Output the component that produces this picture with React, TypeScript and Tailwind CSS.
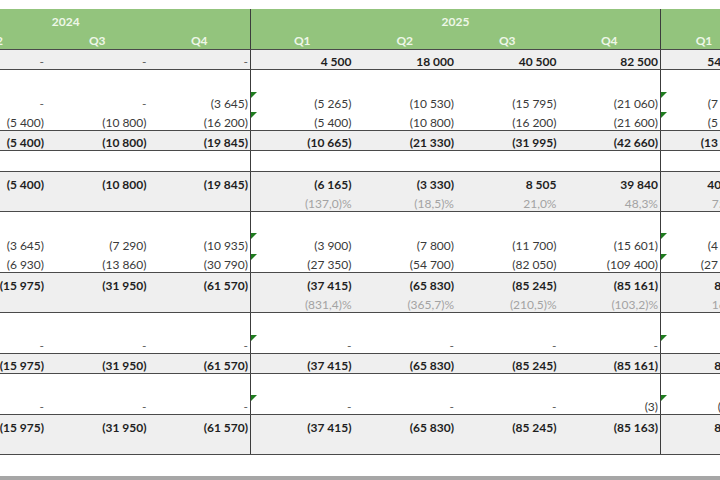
import React from 'react';

type Row = {
  vals: string[];
  bg?: 'gray' | 'white';
  bold?: boolean;
  pct?: boolean;
  line?: boolean;
  flags?: boolean;
  boldFrom?: number;
};

const S = '\u00A0';
const n = (s: string) => s.replace(/ /g, S);

const rows: Row[] = [
  { vals: ['-', '-', '-', '4 500', '18 000', '40 500', '82 500', '54 000'], bg: 'gray', boldFrom: 3, line: true },
  { vals: [] },
  { vals: ['-', '-', '(3 645)', '(5 265)', '(10 530)', '(15 795)', '(21 060)', '(7 900)'], flags: true },
  { vals: ['(5 400)', '(10 800)', '(16 200)', '(5 400)', '(10 800)', '(16 200)', '(21 600)', '(5 400)'], flags: true, line: true },
  { vals: ['(5 400)', '(10 800)', '(19 845)', '(10 665)', '(21 330)', '(31 995)', '(42 660)', '(13 300)'], bg: 'gray', bold: true, line: true },
  { vals: [], line: true },
  { vals: ['(5 400)', '(10 800)', '(19 845)', '(6 165)', '(3 330)', '8 505', '39 840', '40 500'], bg: 'gray', bold: true },
  { vals: ['', '', '', '(137,0)%', '(18,5)%', '21,0%', '48,3%', '75,0%'], bg: 'gray', pct: true, line: true },
  { vals: [] },
  { vals: ['(3 645)', '(7 290)', '(10 935)', '(3 900)', '(7 800)', '(11 700)', '(15 601)', '(4 000)'], flags: true },
  { vals: ['(6 930)', '(13 860)', '(30 790)', '(27 350)', '(54 700)', '(82 050)', '(109 400)', '(27 350)'], flags: true, line: true },
  { vals: ['(15 975)', '(31 950)', '(61 570)', '(37 415)', '(65 830)', '(85 245)', '(85 161)', '8 165'], bg: 'gray', bold: true },
  { vals: ['', '', '', '(831,4)%', '(365,7)%', '(210,5)%', '(103,2)%', '16,4%'], bg: 'gray', pct: true, line: true },
  { vals: [] },
  { vals: ['-', '-', '-', '-', '-', '-', '-', ''], flags: true, line: true },
  { vals: ['(15 975)', '(31 950)', '(61 570)', '(37 415)', '(65 830)', '(85 245)', '(85 161)', '8 165'], bg: 'gray', bold: true, line: true },
  { vals: [] },
  { vals: ['-', '-', '-', '-', '-', '-', '(3)', '(300)'], flags: true, line: true },
  { vals: ['(15 975)', '(31 950)', '(61 570)', '(37 415)', '(65 830)', '(85 245)', '(85 163)', '8 165'], bg: 'gray', bold: true },
  { vals: [], bg: 'gray', line: true },
];

const quarters = ['Q2', 'Q3', 'Q4', 'Q1', 'Q2', 'Q3', 'Q4', 'Q1'];

const Flag = () => (
  <svg className="absolute left-0 top-[1px]" width="6" height="6" viewBox="0 0 6 6">
    <polygon points="0,0 6,0 0,6" fill="#1e7b1e" />
  </svg>
);

// last visible column (2026 Q1) is narrower than the rest
const colW = (i: number) => (i === 7 ? 'w-[86px]' : 'w-[102.5px]');

const cellEdge = (i: number) =>
  i === 2 || i === 6 ? 'border-r border-r-[#3c3c3c]' : '';

export default function App() {
  return (
    <div className="w-[720px] h-[480px] overflow-hidden bg-white flex flex-col font-['Lato','Liberation_Sans',sans-serif]">
      <div className="h-[9px] shrink-0" />

      <div className="ml-[-56.5px] flex flex-col shrink-0">
        {/* header */}
        <div className="flex h-[20.5px] bg-[#93c47d] text-[#eef7e8] font-bold text-[12px] leading-[14px]">
          <div className="w-[307.5px] shrink-0 pr-[62px] flex items-end justify-center pb-[1px] border-r border-r-[#3c3c3c]">2024</div>
          <div className="w-[410px] shrink-0 flex items-end justify-center pb-[1px] border-r border-r-[#3c3c3c]">2025</div>
          <div className="w-[102.5px] shrink-0" />
        </div>
        <div className="flex h-[20.5px] bg-[#93c47d] text-[#eef7e8] font-bold text-[12px] leading-[14px] border-b border-b-[#4a4a4a]">
          {quarters.map((q, i) => (
            <div key={i} className={`${colW(i)} shrink-0 flex items-end justify-center pb-[1px] ${cellEdge(i)}`}>
              {q}
            </div>
          ))}
        </div>

        {rows.map((r, ri) => (
          <div
            key={ri}
            className={`flex h-[20.25px] text-[12px] leading-[14px] ${r.bg === 'gray' ? 'bg-[#efefef]' : 'bg-white'} ${r.line ? 'border-b border-b-[#4a4a4a]' : ''}`}
          >
            {Array.from({ length: 8 }).map((_, i) => {
              const v = r.vals[i] ?? '';
              const isBold = r.bold || (r.boldFrom !== undefined && i >= r.boldFrom);
              const dash = v === '-';
              let color = 'text-[#3a3a3a]';
              if (isBold && !dash) color = 'text-[#1f1f1f]';
              if (r.pct) color = 'text-[#a3a3a3]';
              if (dash) color = 'text-[#5a5a5a]';
              return (
                <div
                  key={i}
                  className={`relative ${colW(i)} shrink-0 flex items-end justify-end pr-[2px] ${cellEdge(i)} ${color} ${isBold && !dash ? 'font-bold' : ''}`}
                >
                  {r.flags && (i === 3 || i === 7) && <Flag />}
                  <span className="whitespace-nowrap">{n(v)}</span>
                </div>
              );
            })}
          </div>
        ))}
      </div>

      <div className="flex-1" />
      <div className="h-[4px] shrink-0 bg-[#a6a6a6]" />
    </div>
  );
}
